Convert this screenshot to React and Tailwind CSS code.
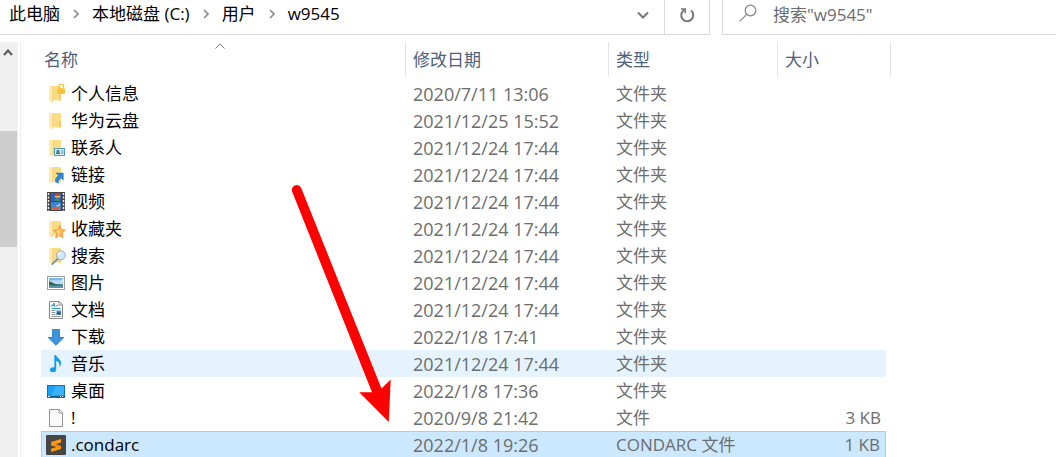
import { Fragment } from "react";

const crumbs = ["此电脑", "本地磁盘 (C:)", "用户", "w9545"];

const files = [
  { name: "个人信息", date: "2020/7/11 13:06", type: "文件夹", icon: "lock" },
  { name: "华为云盘", date: "2021/12/25 15:52", type: "文件夹", icon: "folder" },
  { name: "联系人", date: "2021/12/24 17:44", type: "文件夹", icon: "contacts" },
  { name: "链接", date: "2021/12/24 17:44", type: "文件夹", icon: "links" },
  { name: "视频", date: "2021/12/24 17:44", type: "文件夹", icon: "video" },
  { name: "收藏夹", date: "2021/12/24 17:44", type: "文件夹", icon: "favorites" },
  { name: "搜索", date: "2021/12/24 17:44", type: "文件夹", icon: "search" },
  { name: "图片", date: "2021/12/24 17:44", type: "文件夹", icon: "pictures" },
  { name: "文档", date: "2021/12/24 17:44", type: "文件夹", icon: "documents" },
  { name: "下载", date: "2022/1/8 17:41", type: "文件夹", icon: "downloads" },
  { name: "音乐", date: "2021/12/24 17:44", type: "文件夹", icon: "music", state: "hover" },
  { name: "桌面", date: "2022/1/8 17:36", type: "文件夹", icon: "desktop" },
  { name: "!", date: "2020/9/8 21:42", type: "文件", size: "3 KB", icon: "file" },
  { name: ".condarc", date: "2022/1/8 19:26", type: "CONDARC 文件", size: "1 KB", icon: "sublime", state: "selected" },
];

function Folder() {
  return (
    <>
      <path d="M4 2h10.5l.5 1v13.5H4z" fill="#fbdc83" />
      <path d="M13 10h2v6.5h-2z" fill="#f3cd68" />
      <path d="M3 1.5l4 1.3v13L5.500 18 3 17z" fill="#ffebad" />
      <path d="M7 2.8v13L5.500 18" fill="none" stroke="#edc45f" strokeWidth=".7" />
    </>
  );
}

const icons = {
  folder: <Folder />,
  lock: (
    <>
      <Folder />
      <path d="M12.500 4.500V2.500a2.500 2.500 0 0 1 5 0v2" fill="none" stroke="#e9c65e" strokeWidth="1.400" />
      <rect x="11" y="4" width="8" height="6" rx=".5" fill="#f7cf4d" />
      <path d="M11 6.500h8M11 8.500h8" stroke="#e9b52c" strokeWidth=".7" />
    </>
  ),
  contacts: (
    <>
      <Folder />
      <rect x="8.500" y="10.500" width="10" height="7" fill="#d9f0fa" stroke="#4c9cc4" />
      <rect x="10" y="12" width="4" height="4" fill="#8ebfd3" />
      <circle cx="12" cy="13" r="1" fill="#3a5c57" />
      <path d="M10 16c0-2.500 4-2.500 4 0z" fill="#35645f" />
      <path d="M15 13h2.500M15 15h2.500" stroke="#3e88b5" />
    </>
  ),
  links: (
    <>
      <Folder />
      <path d="M10 8h7.300v7.300l-2.300-2.300c-2 1-2.800 2.700-2.400 5l-2.700-.5c-1.300-3 .2-5.300 2.600-7z" fill="#2e86d6" stroke="#1f6fb9" strokeWidth=".5" />
    </>
  ),
  video: (
    <>
      <rect x="1" y="0" width="18" height="19" fill="#454545" />
      <rect x="5" y="1" width="10" height="8" fill="#2a62c9" />
      <rect x="5" y="10" width="10" height="8" fill="#3c83de" />
      <circle cx="11.500" cy="4" r="2.500" fill="#d8432d" />
      <path d="M9 4h5v1.500H9z" fill="#f1c832" />
      <path d="M9 8c0-2 5-2 5 0v1H9z" fill="#3f9843" />
      <path d="M9 11c1 3 3 3 5 0v3l-3 1z" fill="#efc33a" />
      <path d="M6 17c1-3 6-3 8 0v1H6z" fill="#d85f3e" />
      <path d="M2.500 1v18M17.500 1v18" stroke="#f2f2f2" strokeWidth="1.500" strokeDasharray="2 1.500" />
    </>
  ),
  favorites: (
    <>
      <Folder />
      <path d="M13.800 6.500l1.400 4 4 .6-3 2.800.8 5-3.500-2.400L9.700 19l.9-4.700-2.900-3 4.200-.6z" fill="#ffb74d" stroke="#ee8b35" strokeWidth=".8" />
      <path d="M13.800 8.500v7l-2.800 2 .8-3.500-2-2.200 2.800-.4z" fill="#ffd58a" />
    </>
  ),
  search: (
    <>
      <Folder />
      <path d="M11.500 13L6.300 18.200" stroke="#6996ba" strokeWidth="1.800" strokeLinecap="round" />
      <circle cx="15" cy="9.300" r="4.400" fill="#cfeafb" stroke="#96a9b8" />
      <path d="M12 9a3 3 0 0 1 3-2.700" stroke="#fff" fill="none" />
    </>
  ),
  pictures: (
    <>
      <rect x="1.500" y="3.500" width="17" height="13" fill="#fff" stroke="#a0a0a0" />
      <rect x="3" y="5" width="14" height="10" fill="#79b8ee" />
      <path d="M3 8c4-2 9 1 14-2v5H3z" fill="#b9dcf4" />
      <path d="M3 8.500c3 0 4 2 7 2.500l7 .8V13H3z" fill="#34665a" />
      <path d="M3 12.500h14V15H3z" fill="#5b93a7" />
    </>
  ),
  documents: (
    <>
      <path d="M3.500 1.500h10l3 3v14h-13z" fill="#fbfbfb" stroke="#8b8b8b" />
      <path d="M13 1.500V5h3.500" fill="none" stroke="#8b8b8b" />
      <path d="M5.200 6.700L8 3.200l.8 3.500M6.200 5.500h2.500" fill="none" stroke="#278bd4" />
      <path d="M10 5.500h2M5.500 8.500h9" stroke="#3296dc" />
      <path d="M5.500 10.500h4M5.500 12.500h4M5.500 14.500h4M5.500 16.500h9" stroke="#8f9da6" />
      <rect x="10.500" y="10.500" width="4.500" height="4" fill="#3b8ccb" />
      <path d="M10.500 13.500l2-1.500 2.500 1.500v1h-4.500z" fill="#244f4c" />
    </>
  ),
  downloads: (
    <path d="M6.500 2.500h7v8h4.300L10 18.300 2.200 10.500h4.300z" fill="#3c94df" stroke="#2474b8" strokeWidth=".8" />
  ),
  music: (
    <>
      <ellipse cx="7" cy="15.700" rx="3" ry="2.500" fill="#0f9bea" />
      <path d="M8.400 1h1.800c.3 3.300 5.800 4.200 4.700 9.200-.3 1.300-1 2.300-1.800 3.200 1.100-3.600 0-5.600-2.900-6.400v9H8.400z" fill="#0f9bea" />
    </>
  ),
  desktop: (
    <>
      <rect x="1.500" y="4.500" width="17" height="12" fill="#17a1f5" stroke="#0875b8" />
      <path d="M10 5h8v9l-13 .5z" fill="#3db2fa" />
      <path d="M1 15.500h18" stroke="#075e94" />
      <path d="M2 15.500h2M14 15.500h1M16 15.500h1" stroke="#e6f5ff" />
    </>
  ),
  file: (
    <>
      <path d="M3.500 1.500h10l3 3v14h-13z" fill="#f9faf9" stroke="#939393" />
      <path d="M13 1.500V5h3.500" fill="#fff" stroke="#939393" />
    </>
  ),
  sublime: (
    <>
      <rect width="20" height="20" rx="1" fill="#464646" />
      <path d="M15 4v3.400L9.300 9.200l5.700 1.700v3.200L5 17v-3.300l5.600-1.800L5 10.200V7z" fill="#ff9b0b" />
      <path d="M5 10.200V7l10 4v3.100z" fill="#f28b00" opacity=".6" />
    </>
  ),
};

function FileIcon({ name }) {
  return (
    <svg className="w-5 h-5 shrink-0" viewBox="0 0 20 20" aria-hidden="true">
      {icons[name]}
    </svg>
  );
}

// background and outline of each cell, by row state
const rowStyles = {
  hover: { cell: "bg-[#e5f3ff]", last: "" },
  selected: {
    cell: "bg-[#cce8ff] border-y border-[#99d1ff]",
    last: "border-r",
  },
};

function FileRow({ file }) {
  const style = rowStyles[file.state] || { cell: "", last: "" };

  return (
    <tr className="h-[27px] text-[#6d6d6d]">
      <td className={`p-0 ${style.cell}`}>
        <div className={`h-[25px] flex items-center gap-[5px] text-black ${file.state === "selected" ? "border-l border-[#99d1ff] pl-1" : "pl-[5px]"}`}>
          <FileIcon name={file.icon} />
          <span>{file.name}</span>
        </div>
      </td>
      <td className={`p-0 pl-[7px] text-[18px] ${style.cell}`}>{file.date}</td>
      <td className={`p-0 pl-[7px] ${style.cell}`}>{file.type}</td>
      <td className={`p-0 pr-[5px] text-right ${style.cell} ${style.last}`}>{file.size}</td>
      <td className="p-0"></td>
    </tr>
  );
}

function AddressBar() {
  return (
    <header className="flex h-[35px] shrink-0 gap-3">
      <div className="flex flex-1 border-b border-[#d9d9d9]">
        <nav className="flex flex-1 h-7 items-center pl-[9px]">
          {crumbs.map((crumb, i) => (
            <Fragment key={crumb}>
              {i > 0 && (
                <svg className="w-[6px] h-[10px] mx-[13px]" viewBox="0 0 6 10" fill="none" stroke="#8a8a8a" strokeWidth="1.600" aria-hidden="true">
                  <path d="M1 1l4 4-4 4" />
                </svg>
              )}
              <a href="#" className="text-black">{crumb}</a>
            </Fragment>
          ))}
        </nav>
        <button className="w-[42px] h-[30px] flex items-center justify-center" aria-label="历史记录">
          <svg className="w-3 h-2" viewBox="0 0 12 8" fill="none" stroke="#777" strokeWidth="2">
            <path d="M1 1.500l5 5 5-5" />
          </svg>
        </button>
        <button className="w-[46px] h-[34px] border-x border-[#d9d9d9] flex justify-center items-start pt-[7px]" aria-label="刷新">
          <svg className="w-4 h-4" viewBox="0 0 16 16" fill="none" stroke="#777" strokeWidth="2">
            <path d="M12 3.500A6 6 0 1 1 5.200 3" />
            <path d="M2 2h4.200v4.200" strokeWidth="1.600" />
          </svg>
        </button>
      </div>

      <label className="flex w-[334px] border-b border-l border-[#d9d9d9] pl-4">
        <svg className="w-[18px] h-[18px] mt-1 shrink-0" viewBox="0 0 18 18" fill="none" stroke="#858585" strokeWidth="1.200" aria-hidden="true">
          <circle cx="11.500" cy="6.500" r="5.300" />
          <path d="M7.700 10.300L.7 17.300" />
        </svg>
        <input
          type="text"
          aria-label="搜索"
          placeholder={'搜索"w9545"'}
          className="flex-1 min-w-0 h-7 ml-4 bg-transparent outline-none placeholder:text-[#6d6d6d]"
        />
      </label>
    </header>
  );
}

function ScrollBar() {
  return (
    <div className="w-[18px] shrink-0 bg-[#f0f0f0]">
      <button className="w-[15px] h-[21px] flex items-center justify-center" aria-label="向上滚动">
        <svg className="w-[10px] h-[7px]" viewBox="0 0 10 7" fill="none" stroke="#555" strokeWidth="2">
          <path d="M1 6l4-4.500L9 6" />
        </svg>
      </button>
      <div className="w-[17px] h-[116px] mt-[68px] bg-[#cdcdcd]"></div>
    </div>
  );
}

export default function App() {
  return (
    <div className="relative h-screen flex flex-col overflow-hidden bg-white text-[17px] leading-6 font-['Open_Sans','Noto_Sans_CJK_SC',sans-serif]">
      <AddressBar />

      <main className="flex flex-1 min-h-0 mt-[7px]">
        <ScrollBar />

        <div className="flex-1 ml-[2px] border-l border-[#eeeeee] pl-5 pr-[165px]">
          <table className="w-full table-fixed border-separate border-spacing-0">
            <colgroup>
              <col />
              <col className="w-[203px]" />
              <col className="w-[169px]" />
              <col className="w-[108px]" />
              <col className="w-[5px]" />
            </colgroup>
            <thead>
              <tr className="text-left text-[#4c607a]">
                <th className="relative p-0 pb-[3px] font-normal">
                  <svg className="absolute top-px left-[49%] -translate-x-1/2 w-[10px] h-[6px]" viewBox="0 0 10 6" fill="none" stroke="#777" aria-hidden="true">
                    <path d="M.5 5.500L5 1l4.500 4.500" />
                  </svg>
                  <div className="h-[35px] flex items-center pl-[3px] border-r border-[#e5e5e5]">名称</div>
                </th>
                <th className="p-0 pb-[3px] font-normal">
                  <div className="h-[35px] flex items-center pl-[7px] border-r border-[#e5e5e5]">修改日期</div>
                </th>
                <th className="p-0 pb-[3px] font-normal">
                  <div className="h-[35px] flex items-center pl-[7px] border-r border-[#e5e5e5]">类型</div>
                </th>
                <th className="p-0 pb-[3px] font-normal">
                  <div className="h-[35px] flex items-center pl-[7px]">大小</div>
                </th>
                <th className="p-0 pb-[3px]">
                  <div className="h-[35px] border-r border-[#e5e5e5]"></div>
                </th>
              </tr>
            </thead>
            <tbody>
              {files.map((file) => (
                <FileRow key={file.name} file={file} />
              ))}
            </tbody>
          </table>
        </div>
      </main>

      {/* Arrow pointing at .condarc */}
      <svg className="absolute left-[290px] top-[183px] w-[102px] h-[240px] pointer-events-none" viewBox="0 0 102 240" fill="#fe0000" aria-hidden="true">
        <path d="M2.300 9A4.800 4.800 0 0 1 11.200 5L91.500 205.500 100.700 196.500 98.800 239 69.200 209.300 82 209.300z" />
      </svg>
    </div>
  );
}
